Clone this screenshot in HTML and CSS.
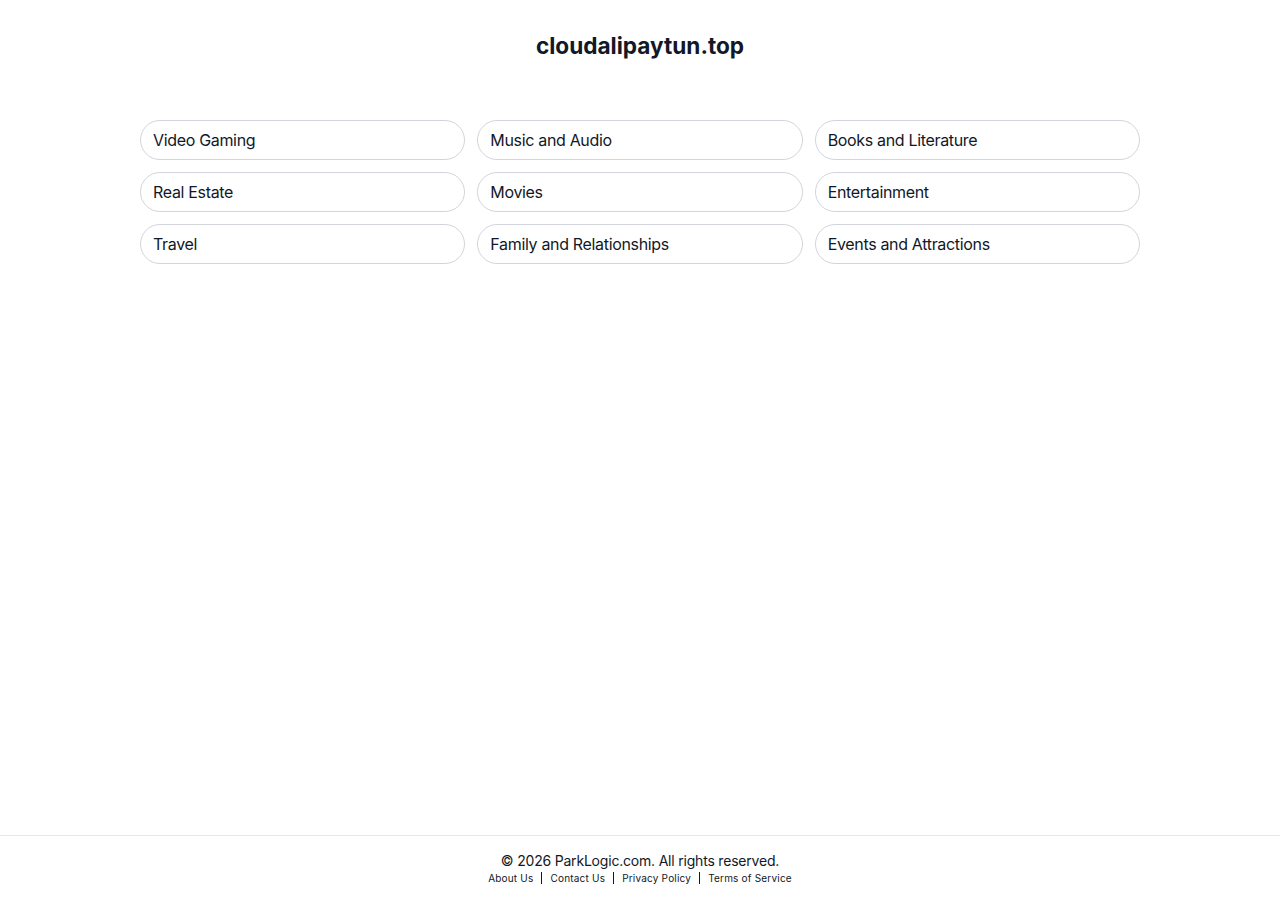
FILE: index.html
```html
<!DOCTYPE html>
<html lang="en">
<head>
<meta charset="utf-8">
<title>cloudalipaytun.top</title>
<link rel="stylesheet" href="styles.css">
</head>
<body>
<div class="page">
  <header class="header">
    <h1 class="title">cloudalipaytun.top</h1>
  </header>
  <main class="main">
    <div class="grid">
      <a class="chip" href="#">Video Gaming</a>
      <a class="chip" href="#">Music and Audio</a>
      <a class="chip" href="#">Books and Literature</a>
      <a class="chip" href="#">Real Estate</a>
      <a class="chip" href="#">Movies</a>
      <a class="chip" href="#">Entertainment</a>
      <a class="chip" href="#">Travel</a>
      <a class="chip" href="#">Family and Relationships</a>
      <a class="chip" href="#">Events and Attractions</a>
    </div>
  </main>
  <footer class="footer">
    <div class="copy">© 2026 ParkLogic.com. All rights reserved.</div>
    <nav class="links">
      <a href="#">About Us</a><span class="sep"></span>
      <a href="#">Contact Us</a><span class="sep"></span>
      <a href="#">Privacy Policy</a><span class="sep"></span>
      <a href="#">Terms of Service</a>
    </nav>
  </footer>
</div>
</body>
</html>
```
FILE: styles.css
```css
* { box-sizing: border-box; }
html, body { margin: 0; padding: 0; }
body {
  font-family: Inter, "Noto Sans", Arial, sans-serif;
  color: #111827;
  background: #fff;
}
.page {
  min-height: 900px;
  display: flex;
  flex-direction: column;
}
.header {
  padding-top: 30px;
  text-align: center;
}
.title {
  margin: 0;
  font-size: 22.6px;
  line-height: 32px;
  font-weight: 700;
  color: #111827;
}
.main {
  flex: 1;
  padding-top: 58px;
}
.grid {
  width: 1000px;
  margin: 0 auto;
  display: grid;
  grid-template-columns: repeat(3, 1fr);
  gap: 12px;
}
.chip {
  display: flex;
  align-items: center;
  height: 40px;
  padding: 0 12px;
  border: 1px solid #d1d5db;
  border-radius: 20px;
  font-size: 16px;
  letter-spacing: -0.33px;
  color: #111827;
  text-decoration: none;
}
.footer {
  border-top: 1px solid #e5e7eb;
  height: 65px;
  padding-top: 16px;
  text-align: center;
}
.copy {
  font-size: 14px;
  letter-spacing: -0.2px;
  line-height: 18px;
  color: #111827;
}
.links {
  display: flex;
  justify-content: center;
  align-items: center;
  font-size: 10px;
  letter-spacing: 0.2px;
  line-height: 16px;
}
.links a {
  color: #111827;
  text-decoration: none;
}
.sep {
  display: inline-block;
  width: 1px;
  height: 12px;
  background: #111827;
  margin: 0 8px;
}
```
